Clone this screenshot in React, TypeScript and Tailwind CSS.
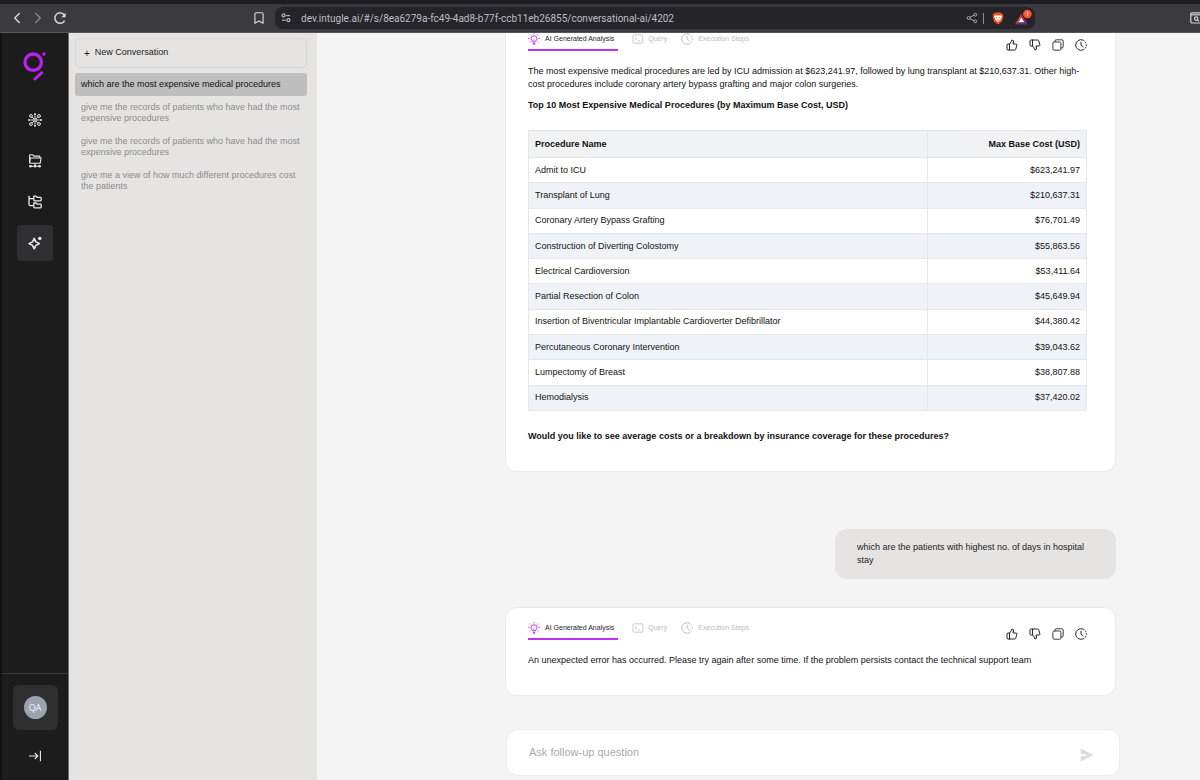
import React from "react";
import { Bookmark, ChevronLeft, ChevronRight, ThumbsUp } from "lucide-react";

const procedures: [string, string][] = [
  ["Admit to ICU", "$623,241.97"],
  ["Transplant of Lung", "$210,637.31"],
  ["Coronary Artery Bypass Grafting", "$76,701.49"],
  ["Construction of Diverting Colostomy", "$55,863.56"],
  ["Electrical Cardioversion", "$53,411.64"],
  ["Partial Resection of Colon", "$45,649.94"],
  ["Insertion of Biventricular Implantable Cardioverter Defibrillator", "$44,380.42"],
  ["Percutaneous Coronary Intervention", "$39,043.62"],
  ["Lumpectomy of Breast", "$38,807.88"],
  ["Hemodialysis", "$37,420.02"],
];

const history = [
  "which are the most expensive medical procedures",
  "give me the records of patients who have had the most expensive procedures",
  "give me the records of patients who have had the most expensive procedures",
  "give me a view of how much different procedures cost the patients",
];

function ReloadIcon() {
  return (
    <svg viewBox="0 0 14 14" className="size-[14px]" fill="none" stroke="currentColor" strokeWidth="1.5">
      <path d="M11.6 9.6A5.2 5.2 0 1 1 11.4 4.2" />
      <path d="M12.6 1.8v4.4H8.3z" fill="currentColor" stroke="none" />
    </svg>
  );
}

function TuneIcon() {
  return (
    <svg viewBox="0 0 12 12" className="size-3" fill="none" stroke="currentColor" strokeWidth="1.2">
      <circle cx="3.6" cy="3.4" r="1.5" />
      <path d="M6.2 3.6H10" />
      <circle cx="8.4" cy="8.2" r="1.5" />
      <path d="M2 8.2h3.8" />
    </svg>
  );
}

function ShareIcon() {
  return (
    <svg viewBox="0 0 12 12" className="size-3" fill="none" stroke="currentColor" strokeWidth="1">
      <circle cx="2.6" cy="6" r="1.5" />
      <circle cx="9.3" cy="2.7" r="1.4" />
      <circle cx="9.3" cy="9.3" r="1.4" />
      <path d="M4 5.3l4-2M4 6.7l4 2" />
    </svg>
  );
}

function ShieldIcon() {
  return (
    <svg viewBox="0 0 12 13" className="h-[13px] w-3">
      <path d="M3.4.6h5.2l1 1.1 1-.1.8 1.5-.4 1 .3 1L10 9.6 6 12.6 2 9.6.7 5.1l.3-1-.4-1 .8-1.5 1 .1z" fill="#f4511e" />
      <path d="M3 3.2l1.8.4L6 3.3l1.2.3L9 3.2l.9 1.6-1.2 1.9.2.9L6 10 3.1 7.6l.2-.9-1.2-1.9z" fill="#fff" />
      <path d="M3.7 4.9l1.5.3-.2 1.2zM8.3 4.9l-1.5.3.2 1.2zM6 5v2.3L4.9 8 6 8.8 7.1 8 6 7.3z" fill="#f4511e" />
    </svg>
  );
}

function RewardsIcon() {
  return (
    <svg viewBox="0 0 18 18" className="size-[18px]">
      <path d="M7.5 4.6L1 15.6l4-2 2.5-4.4z" fill="#ef4a2b" />
      <path d="M7.5 4.6L14 15.6l-4-2-2.5-4.4z" fill="#9e1f63" />
      <path d="M1 15.6h13l-4-2.3H5z" fill="#5b2d91" />
      <path d="M7.5 8.6L10.2 13.3H4.8z" fill="#fff" />
      <circle cx="13.4" cy="5" r="4.3" fill="#ff5630" />
      <path d="M12.7 3.9l1-.7v3.6" fill="none" stroke="#fff" strokeWidth=".8" />
    </svg>
  );
}

function TabSearchIcon() {
  return (
    <svg viewBox="0 0 15 12" className="h-3 w-[15px] shrink-0" fill="none" stroke="currentColor" strokeWidth="1.2">
      <rect x=".8" y=".8" width="13.4" height="10.2" rx="1" />
      <path d="M.8 2.8h13.4" />
      <circle cx="6.2" cy="6.6" r="1.7" />
      <path d="M7.5 7.9l1.5 1.4" />
    </svg>
  );
}

function BrandLogo() {
  return (
    <svg viewBox="0 0 24 30" className="h-[30px] w-6" fill="none" stroke="#bd1fef" strokeLinecap="round">
      <circle cx="10.2" cy="11.2" r="8.2" strokeWidth="3.4" />
      <circle cx="21" cy="3" r="1.7" fill="#bd1fef" stroke="none" />
      <path d="M18.6 21.8L12 28" strokeWidth="3" />
    </svg>
  );
}

function HubIcon() {
  return (
    <svg viewBox="0 0 14 14" className="size-[14px]" fill="none" stroke="currentColor" strokeWidth="1">
      <circle cx="7" cy="7" r="1.2" />
      <path d="M7 2.4v3.2M7 8.4v3.2M2.4 7h3.2M8.4 7h3.2M4.2 4.2L6 6M8 8l1.8 1.8M9.8 4.2L8 6M6 8L4.2 9.8" />
      <circle cx="3" cy="3" r="1.4" />
      <circle cx="11" cy="3" r="1.4" />
      <circle cx="3" cy="11" r="1.4" />
      <circle cx="11" cy="11" r="1.4" />
      <path d="M6 1.2h2M6 12.8h2M1.1 6v2M12.9 6v2" strokeWidth="1.5" />
    </svg>
  );
}

function FolderNetIcon() {
  return (
    <svg viewBox="0 0 14 14" className="size-[14px]" fill="none" stroke="currentColor" strokeWidth="1.1" strokeLinejoin="round">
      <path d="M1.6 8.6V1.6q0-.8.8-.8h2.3l1.2 1.3h5.3q.7 0 .7.7v1.1" />
      <path d="M1.6 8.9L2.3 4h10.8l-.8 4.6q-.1.7-.7.7H2.3q-.7 0-.7-.6z" />
      <path d="M7 9.5V12M1 12.2h12" />
      <circle cx="2.5" cy="12.2" r=".7" fill="currentColor" />
      <circle cx="7" cy="12.2" r=".7" fill="currentColor" />
      <circle cx="11.5" cy="12.2" r=".7" fill="currentColor" />
    </svg>
  );
}

function FolderTreeIcon() {
  return (
    <svg viewBox="0 0 14 14" className="size-[14px]" fill="none" stroke="currentColor" strokeWidth="1.3" strokeLinejoin="round">
      <path d="M1 .8v8.7q0 1.1 1.1 1.1H5M1 3.6h4" />
      <path d="M5.8 1.2h2.4l1 1.2h3.2q.8 0 .8.8v1.9q0 .8-.8.8H6.6q-.8 0-.8-.8zM5.8 8h2.4l1 1.2h3.2q.8 0 .8.8v2q0 .8-.8.8H6.6q-.8 0-.8-.8z" />
    </svg>
  );
}

function SparkleIcon() {
  return (
    <svg viewBox="0 0 14 14" className="size-[14px]" fill="none" stroke="currentColor" strokeWidth="1.5" strokeLinejoin="round">
      <path d="M6.2 2.4L7.9 5.9L11.4 7.6L7.9 9.3L6.2 12.8L4.5 9.3L1 7.6L4.5 5.9z" />
      <circle cx="11.8" cy="2.4" r="1.7" fill="currentColor" stroke="none" />
    </svg>
  );
}

function ExpandIcon() {
  return (
    <svg viewBox="0 0 14 12" className="h-3 w-[14px]" fill="none" stroke="currentColor" strokeWidth="1.1">
      <path d="M1 6h8.8M6.8 3l3 3-3 3M12.4 .8v10.4" />
    </svg>
  );
}

function BulbIcon() {
  return (
    <svg viewBox="0 0 12 12" className="size-3" fill="none" stroke="#cb3cf5" strokeWidth="1">
      <path d="M4.6 9V8.2Q3.1 7.2 3.1 5.6A2.9 2.9 0 0 1 8.9 5.6Q8.9 7.2 7.4 8.2V9zM4.7 10.4h2.6M5.2 11.6h1.6M6 8.6V6.6" />
      <path d="M6 .2v1.1M2 1.6l.8.8M10 1.6l-.8.8M.2 5.4h1.3M10.5 5.4h1.3M1.6 9l.9-.6M10.4 9l-.9-.6" />
    </svg>
  );
}

function QueryIcon() {
  return (
    <svg viewBox="0 0 12 12" className="size-3" fill="none" stroke="currentColor" strokeWidth=".8">
      <rect x="1" y="1.8" width="9.8" height="8.4" rx="1" />
      <path d="M3 4.4l1.7 1.5L3 7.4M5.5 7.9h2.6" />
    </svg>
  );
}

function StepsIcon() {
  return (
    <svg viewBox="0 0 12 12" className="size-3" fill="none" stroke="currentColor" strokeWidth="1">
      <path d="M8 10.9A5.3 5.3 0 1 1 8 1.1" />
      <path d="M8 1.1A5.3 5.3 0 0 1 8 10.9" strokeDasharray="1.7 1" />
      <path d="M6 2.8V6l2.4 2" />
    </svg>
  );
}

function CopyIcon() {
  return (
    <svg viewBox="0 0 12 12" className="size-3" fill="none" stroke="currentColor" strokeWidth=".9">
      <rect x=".9" y="3" width="8" height="8.2" rx="1.3" />
      <path d="M3 3V2q0-1.2 1.2-1.2h5.7q1.3 0 1.3 1.3v5.7Q11.2 9 10 9H8.9" />
    </svg>
  );
}

function SendIcon() {
  return (
    <svg viewBox="0 0 14 14" className="size-[14px]" fill="#dcdcdc">
      <path d="M.6.6L13.6 7 .6 13.4V8.4L7.6 7 .6 5.6z" />
    </svg>
  );
}

function BrowserBar() {
  return (
    <header className="flex h-[33px] shrink-0 items-center overflow-hidden border-t-4 border-b border-t-[#1e1e22] border-b-[#56555a] bg-[#3b3a3f] pl-2 text-[#d6d6d8]">
      <button type="button" aria-label="Back"><ChevronLeft className="size-[18px]" /></button>
      <button type="button" aria-label="Forward" className="ml-[3px] text-[#858589]"><ChevronRight className="size-[18px]" /></button>
      <button type="button" aria-label="Reload" className="ml-[6px]"><ReloadIcon /></button>
      <button type="button" aria-label="Bookmark" className="ml-[185px]"><Bookmark className="size-[14px]" /></button>
      <div className="ml-[9px] flex h-[22px] min-w-0 flex-1 items-center rounded-lg bg-[#242429] pr-[3px] pl-[5px]">
        <button type="button" aria-label="Site settings" className="text-[#b9b9bd]"><TuneIcon /></button>
        <input
          aria-label="Address"
          readOnly
          value="dev.intugle.ai/#/s/8ea6279a-fc49-4ad8-b77f-ccb11eb26855/conversational-ai/4202"
          className="ml-[9px] min-w-0 flex-1 bg-transparent font-[Roboto,sans-serif] text-[10px] text-[#bfbfc5] outline-none"
        />
        <button type="button" aria-label="Share" className="text-[#a9a9ad]"><ShareIcon /></button>
        <span className="ml-[5px] h-[11px] w-px bg-[#8c8c90]" />
        <button type="button" aria-label="Shields" className="ml-2"><ShieldIcon /></button>
        <button type="button" aria-label="Rewards" className="ml-[10px]"><RewardsIcon /></button>
      </div>
      <button type="button" aria-label="Search tabs" className="-mr-[5px] ml-[155px] shrink-0"><TabSearchIcon /></button>
    </header>
  );
}

function NavRail() {
  const items = [
    { label: "Connections", icon: <HubIcon /> },
    { label: "Sources", icon: <FolderNetIcon /> },
    { label: "Catalog", icon: <FolderTreeIcon /> },
    { label: "Conversational AI", icon: <SparkleIcon />, active: true },
  ];
  return (
    <nav className="flex w-[69px] shrink-0 flex-col items-center border-r border-l-2 border-r-[#6d6d6d] border-l-[#121212] bg-[#1c1c1c] text-[#ececec]">
      <a href="#home" aria-label="Home" className="mt-[18px]"><BrandLogo /></a>
      <ul className="mt-[21px] flex flex-col gap-[5px]">
        {items.map((item) => (
          <li key={item.label}>
            <button
              type="button"
              aria-label={item.label}
              className={item.active ? "flex size-9 items-center justify-center rounded bg-[#2f2f31]" : "flex size-9 items-center justify-center rounded"}
            >
              {item.icon}
            </button>
          </li>
        ))}
      </ul>
      <div className="mt-auto flex w-full flex-col items-center border-t border-[#3a3a3a] pt-[11px] pb-[18px]">
        <button type="button" className="flex size-[45px] items-center justify-center rounded-md bg-[#2f2f31]">
          <span className="flex size-[23px] items-center justify-center rounded-full bg-[#9ca3af] font-['Noto_Sans',sans-serif] text-[9px] text-[#f1f2f4]">QA</span>
        </button>
        <button type="button" aria-label="Expand menu" className="mt-[20px]"><ExpandIcon /></button>
      </div>
    </nav>
  );
}

function HistoryPanel() {
  return (
    <aside className="w-[248px] shrink-0 bg-[#e5e4e3] pt-[5px] pr-[10px] pl-[6px]">
      <button type="button" className="flex h-[30px] w-full items-center gap-[5px] rounded-[5px] border border-[#d6d5d4] pl-2 text-[#1b1b1b]">
        <span className="text-[10px]">+</span>
        <span>New Conversation</span>
      </button>
      <ul className="mt-[5px]">
        {history.map((title, i) => (
          <li key={i}>
            <button
              type="button"
              className={i === 0 ? "w-full rounded-[3px] bg-[#bebebe] px-[6px] py-[6px] text-left leading-[11px] text-[#111111]" : "w-full px-[6px] py-[6px] text-left leading-[11px] text-[#8c8c8b]"}
            >
              {title}
            </button>
          </li>
        ))}
      </ul>
    </aside>
  );
}

function AnswerCard({ children }: { children: React.ReactNode }) {
  return (
    <article className="rounded-xl border border-[#e9e9e9] bg-white pt-[14px] pr-7 pb-7 pl-[22px]">
      <div className="flex items-start justify-between">
        <div className="flex gap-[14px] text-[7px] leading-3 text-[#bcbcbc]" role="tablist">
          <button type="button" role="tab" aria-selected="true" className="flex items-center gap-[5px] border-b-2 border-[#bd33f0] pr-1 pb-1 text-[#1d1d1d]">
            <BulbIcon />AI Generated Analysis
          </button>
          <button type="button" role="tab" aria-selected="false" className="flex items-center gap-1 border-b-2 border-transparent pb-1">
            <QueryIcon />Query
          </button>
          <button type="button" role="tab" aria-selected="false" className="flex items-center gap-[5px] border-b-2 border-transparent pb-1">
            <StepsIcon />Execution Steps
          </button>
        </div>
        <div className="mt-[6px] flex gap-[11px] text-[#252525]">
          <button type="button" aria-label="Good answer"><ThumbsUp className="size-3" /></button>
          <button type="button" aria-label="Bad answer"><ThumbsUp className="size-3 -scale-y-100" /></button>
          <button type="button" aria-label="Copy"><CopyIcon /></button>
          <button type="button" aria-label="History"><StepsIcon /></button>
        </div>
      </div>
      <div className="mt-[14px] leading-[13px] text-[#111111]">{children}</div>
    </article>
  );
}

function CostTable() {
  return (
    <table className="mt-[18px] h-[281px] w-full border-collapse border border-[#e5e7eb]">
      <thead>
        <tr className="h-[27px] bg-[#f1f2f4]">
          <th scope="col" className="w-[71.5%] border border-[#e5e7eb] px-[6px] text-left font-bold">Procedure Name</th>
          <th scope="col" className="border border-[#e5e7eb] px-[6px] text-right font-bold">Max Base Cost (USD)</th>
        </tr>
      </thead>
      <tbody>
        {procedures.map(([name, cost]) => (
          <tr key={name} className="even:bg-[#eff3f8]">
            <td className="border border-[#e5e7eb] px-[6px]">{name}</td>
            <td className="border border-[#e5e7eb] px-[6px] text-right">{cost}</td>
          </tr>
        ))}
      </tbody>
    </table>
  );
}

export default function App() {
  return (
    <div className="flex h-screen flex-col overflow-hidden font-['Liberation_Sans',Arial,sans-serif] text-[9px]">
      <BrowserBar />
      <div className="flex min-h-0 flex-1">
        <NavRail />
        <HistoryPanel />
        <main className="flex min-w-0 flex-1 flex-col bg-[#f4f4f4] pr-[83px] pl-[188px]">
          <section className="flex min-h-0 flex-1 flex-col justify-end overflow-hidden pr-px">
            <AnswerCard>
              <p>
                The most expensive medical procedures are led by ICU admission at $623,241.97, followed by lung transplant at $210,637.31. Other high-cost procedures include coronary artery bypass grafting and major colon surgeries.
              </p>
              <h2 className="mt-2 font-bold">Top 10 Most Expensive Medical Procedures (by Maximum Base Cost, USD)</h2>
              <CostTable />
              <p className="mt-[19px] font-bold">Would you like to see average costs or a breakdown by insurance coverage for these procedures?</p>
            </AnswerCard>
            <p className="mt-[57px] ml-auto w-[46%] rounded-xl bg-[#e5e4e3] px-[22px] py-3 leading-[13px] text-[#1b1b1b]">
              which are the patients with highest no. of days in hospital stay
            </p>
            <div className="mt-7">
              <AnswerCard>
                <p>An unexpected error has occurred. Please try again after some time. If the problem persists contact the technical support team</p>
              </AnswerCard>
            </div>
          </section>
          <form
            onSubmit={(e) => e.preventDefault()}
            className="mt-[33px] mb-1 -mr-[3px] ml-px flex h-[47px] shrink-0 items-center rounded-xl border border-[#ececec] bg-white pr-[25px] pl-[22px]"
          >
            <input aria-label="Ask follow-up question" placeholder="Ask follow-up question" className="min-w-0 flex-1 text-[11px] outline-none placeholder:text-[#aaaaaa]" />
            <button type="submit" aria-label="Send" className="mt-1"><SendIcon /></button>
          </form>
        </main>
      </div>
    </div>
  );
}
